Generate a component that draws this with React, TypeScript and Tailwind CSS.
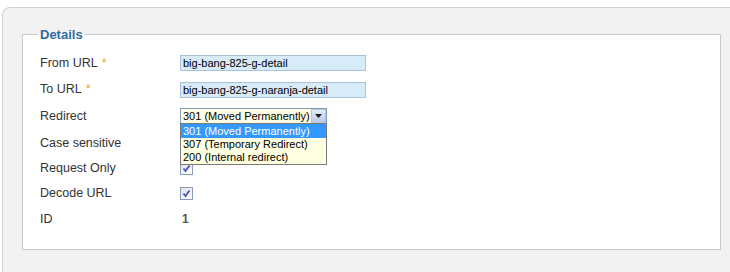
import type { ReactNode } from "react";

const font = { fontFamily: '"Liberation Sans", Arial, sans-serif' };

function TextField({ value }: { value: string }) {
  return (
    <div className="w-[186px] h-[16px] border border-[#a9c3d9] bg-[#d7ebf9] px-[2px] text-[11px] leading-[14px] text-black whitespace-nowrap overflow-hidden">
      {value}
    </div>
  );
}

function Checkbox({ checked }: { checked?: boolean }) {
  return (
    <div className="w-[13px] h-[13px] border border-[#8d9cb5] bg-gradient-to-br from-[#dce1ea] to-[#ffffff] flex items-center justify-center">
      {checked && (
        <svg width="9" height="9" viewBox="0 0 9 9">
          <path d="M1.5 4.5 L3.5 7 L7.5 1.5" fill="none" stroke="#4a55b5" strokeWidth="1.8" />
        </svg>
      )}
    </div>
  );
}

function RedirectSelect() {
  const options = ["301 (Moved Permanently)", "307 (Temporary Redirect)", "200 (Internal redirect)"];
  return (
    <div className="relative">
      <div className="w-[147px] h-[16px] flex items-center border border-[#7f9db9] bg-[#fffde4]">
        <span className="flex-1 pl-[2px] text-[11px] leading-[14px] text-black whitespace-nowrap">
          {options[0]}
        </span>
        <span className="w-[15px] h-[14px] border border-[#b3c4de] bg-gradient-to-b from-[#e3ecfa] to-[#b9cbe9] flex items-center justify-center">
          <svg width="7" height="4" viewBox="0 0 7 4">
            <path d="M0 0 H7 L3.5 4 Z" fill="#1a1a1a" />
          </svg>
        </span>
      </div>
      {/* open dropdown list */}
      <div className="absolute left-0 top-[15px] z-10 w-[147px] border border-[#7a7a7a] bg-[#ffffe1]">
        {options.map((o, i) => (
          <div
            key={o}
            className={
              i === 0
                ? "h-[14px] pl-[2px] text-[11px] leading-[14px] whitespace-nowrap bg-[#3399ff] text-white"
                : "h-[13px] pl-[2px] text-[11px] leading-[13px] whitespace-nowrap text-black"
            }
          >
            {o}
          </div>
        ))}
      </div>
    </div>
  );
}

type Row = { label: string; required?: boolean; height: string; field: ReactNode };

const rows: Row[] = [
  { label: "From URL", required: true, height: "h-[26px]", field: <TextField value="big-bang-825-g-detail" /> },
  { label: "To URL", required: true, height: "h-[27px]", field: <TextField value="big-bang-825-g-naranja-detail" /> },
  { label: "Redirect", height: "h-[26px]", field: <RedirectSelect /> },
  { label: "Case sensitive", height: "h-[28px]", field: <Checkbox /> },
  { label: "Request Only", height: "h-[22px]", field: <Checkbox checked /> },
  { label: "Decode URL", height: "h-[28px]", field: <Checkbox checked /> },
  {
    label: "ID",
    height: "h-[24px]",
    field: <span className="pl-[2px] text-[12px] font-bold text-[#555555]">1</span>,
  },
];

export default function App() {
  return (
    <div className="w-[730px] h-[272px] overflow-hidden bg-white" style={font}>
      <div className="ml-[2px] mt-[7px] w-[740px] h-[280px] rounded-tl-[8px] border-t border-l border-[#d0d0d0] bg-[#f2f2f2] pl-[19px] pt-[19px]">
        <fieldset className="w-[699px] border border-[#c8c8c8] bg-white pl-[17px] pt-[8px] pb-[18px]">
          <legend className="-ml-[2px] px-[2px] text-[13px] leading-[15px] font-bold text-[#2e6b9e]">
            Details
          </legend>
          {rows.map((r) => (
            <div key={r.label} className={`flex items-center ${r.height}`}>
              <div className="w-[140px] text-[12.5px] text-[#333333] whitespace-nowrap">
                {r.label}
                {r.required && <span className="ml-[4px] text-[#eba33c]">*</span>}
              </div>
              {r.field}
            </div>
          ))}
        </fieldset>
      </div>
    </div>
  );
}
